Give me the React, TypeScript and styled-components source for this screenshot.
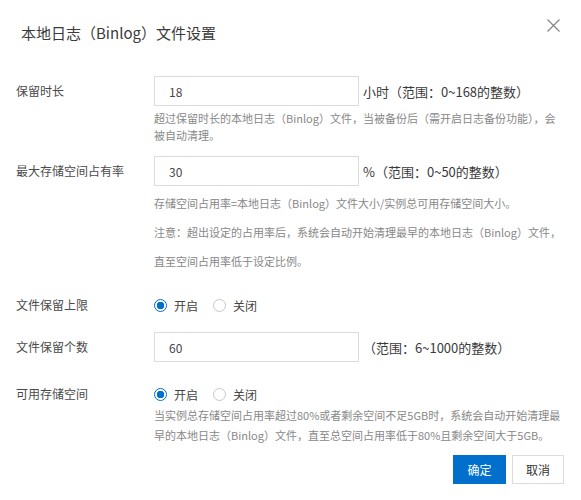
import React, { useState } from 'react';
import styled, { createGlobalStyle } from 'styled-components';

const GlobalStyle = createGlobalStyle`
  html, body {
    margin: 0;
    padding: 0;
    background: #fff;
  }
  body {
    font-family: "Noto Sans CJK SC", "Noto Sans", sans-serif;
    color: #333;
  }
`;

const App: React.FC = () => {
  const [hours, setHours] = useState("18");
  const [rate, setRate] = useState("30");
  const [count, setCount] = useState("60");
  const [limitOn, setLimitOn] = useState(true);
  const [spaceOn, setSpaceOn] = useState(true);

  return (
    <Dialog>
      <GlobalStyle />
      <Header>
        <Title>本地日志（Binlog）文件设置</Title>
        <Close aria-label="close">
          <svg width="13" height="13" viewBox="0 0 13 13">
            <path d="M0.5 0.5 L12.5 12.5 M12.5 0.5 L0.5 12.5" stroke="#888" strokeWidth="1.3" fill="none" />
          </svg>
        </Close>
      </Header>

      <Body>
        <Row $top={33}>
          <Label>保留时长</Label>
          <Field>
            <InputLine>
              <Input value={hours} onChange={e => setHours(e.target.value)} />
              <Suffix>小时（范围：0~168的整数）</Suffix>
            </InputLine>
            <Help>
              超过保留时长的本地日志（Binlog）文件，当被备份后（需开启日志备份功能），会<br />
              被自动清理。
            </Help>
          </Field>
        </Row>

        <Row $top={12}>
          <Label>最大存储空间占有率</Label>
          <Field>
            <InputLine>
              <Input value={rate} onChange={e => setRate(e.target.value)} />
              <Suffix>%（范围：0~50的整数）</Suffix>
            </InputLine>
            <Note>
              存储空间占用率=本地日志（Binlog）文件大小/实例总可用存储空间大小。<br />
              注意：超出设定的占用率后，系统会自动开始清理最早的本地日志（Binlog）文件，<br />
              直至空间占用率低于设定比例。
            </Note>
          </Field>
        </Row>

        <Row $top={18}>
          <Label $short>文件保留上限</Label>
          <Field>
            <RadioGroup>
              <RadioItem onClick={() => setLimitOn(true)}>
                <Dot $checked={limitOn} />开启
              </RadioItem>
              <RadioItem onClick={() => setLimitOn(false)}>
                <Dot $checked={!limitOn} />关闭
              </RadioItem>
            </RadioGroup>
          </Field>
        </Row>

        <Row $top={16}>
          <Label>文件保留个数</Label>
          <Field>
            <InputLine>
              <Input value={count} onChange={e => setCount(e.target.value)} />
              <Suffix>（范围：6~1000的整数）</Suffix>
            </InputLine>
          </Field>
        </Row>

        <Row $top={21}>
          <Label $short>可用存储空间</Label>
          <Field>
            <RadioGroup>
              <RadioItem onClick={() => setSpaceOn(true)}>
                <Dot $checked={spaceOn} />开启
              </RadioItem>
              <RadioItem onClick={() => setSpaceOn(false)}>
                <Dot $checked={!spaceOn} />关闭
              </RadioItem>
            </RadioGroup>
            <SpaceHelp>
              当实例总存储空间占用率超过80%或者剩余空间不足5GB时，系统会自动开始清理最<br />
              早的本地日志（Binlog）文件，直至总空间占用率低于80%且剩余空间大于5GB。
            </SpaceHelp>
          </Field>
        </Row>
      </Body>

      <Footer>
        <Button $primary>确定</Button>
        <Button>取消</Button>
      </Footer>
    </Dialog>
  );
};

export default App;

const Dialog = styled.div`
  width: 581px;
  height: 500px;
  box-sizing: border-box;
  background: #fff;
  overflow: hidden;
`;

const Header = styled.div`
  display: flex;
  justify-content: space-between;
  align-items: flex-start;
  padding: 23px 21px 0 21px;
`;

const Title = styled.div`
  font-size: 15px;
  line-height: 20px;
  color: #3a3a3a;
`;

const Close = styled.button`
  border: none;
  background: none;
  padding: 0;
  margin-top: -4px;
  width: 13px;
  height: 13px;
  cursor: pointer;
  display: flex;
`;

const Body = styled.div`
  display: flex;
  flex-direction: column;
`;

const Row = styled.div<{ $top: number }>`
  display: grid;
  grid-template-columns: 138px 1fr;
  padding-left: 16px;
  margin-top: ${p => p.$top}px;
`;

const Label = styled.div<{ $short?: boolean }>`
  font-size: 12px;
  line-height: ${p => (p.$short ? 22 : 30)}px;
  color: #4a4a4a;
  white-space: nowrap;
`;

const Field = styled.div`
  display: flex;
  flex-direction: column;
`;

const InputLine = styled.div`
  display: flex;
  align-items: center;
`;

const Input = styled.input`
  width: 205px;
  height: 30px;
  box-sizing: border-box;
  border: 1px solid #dcdcdc;
  padding: 0 14px;
  font-family: inherit;
  font-size: 12px;
  color: #444;
  outline: none;
`;

const Suffix = styled.span`
  font-size: 13px;
  color: #3a3a3a;
  margin-left: 4px;
  white-space: nowrap;
`;

const Help = styled.div`
  font-size: 11px;
  line-height: 17px;
  color: #888;
  margin-top: 4px;
  white-space: nowrap;
`;

const Note = styled(Help)`
  line-height: 29px;
  margin-top: 3px;
`;

const SpaceHelp = styled(Help)`
  line-height: 20px;
  margin-top: 0;
`;

const RadioGroup = styled.div`
  display: flex;
  align-items: center;
  height: 22px;
  gap: 15px;
`;

const RadioItem = styled.label`
  display: flex;
  align-items: center;
  gap: 7px;
  font-size: 12px;
  color: #444;
  cursor: pointer;
`;

const Dot = styled.span<{ $checked: boolean }>`
  width: 13px;
  height: 13px;
  box-sizing: border-box;
  border-radius: 50%;
  border: 1px solid ${p => (p.$checked ? '#0070cc' : '#c8c8c8')};
  background: ${p => (p.$checked ? 'radial-gradient(circle, #0070cc 0 3.5px, #fff 4px)' : '#fff')};
`;

const Footer = styled.div`
  display: flex;
  justify-content: flex-end;
  gap: 6px;
  padding: 10px 17px 0 0;
`;

const Button = styled.button<{ $primary?: boolean }>`
  height: 29px;
  width: ${p => (p.$primary ? 53 : 52)}px;
  box-sizing: border-box;
  border: 1px solid ${p => (p.$primary ? '#0070cc' : '#dcdcdc')};
  background: ${p => (p.$primary ? '#0070cc' : '#fff')};
  color: ${p => (p.$primary ? '#fff' : '#333')};
  font-family: inherit;
  font-size: 12px;
  padding: 0;
  cursor: pointer;
`;
